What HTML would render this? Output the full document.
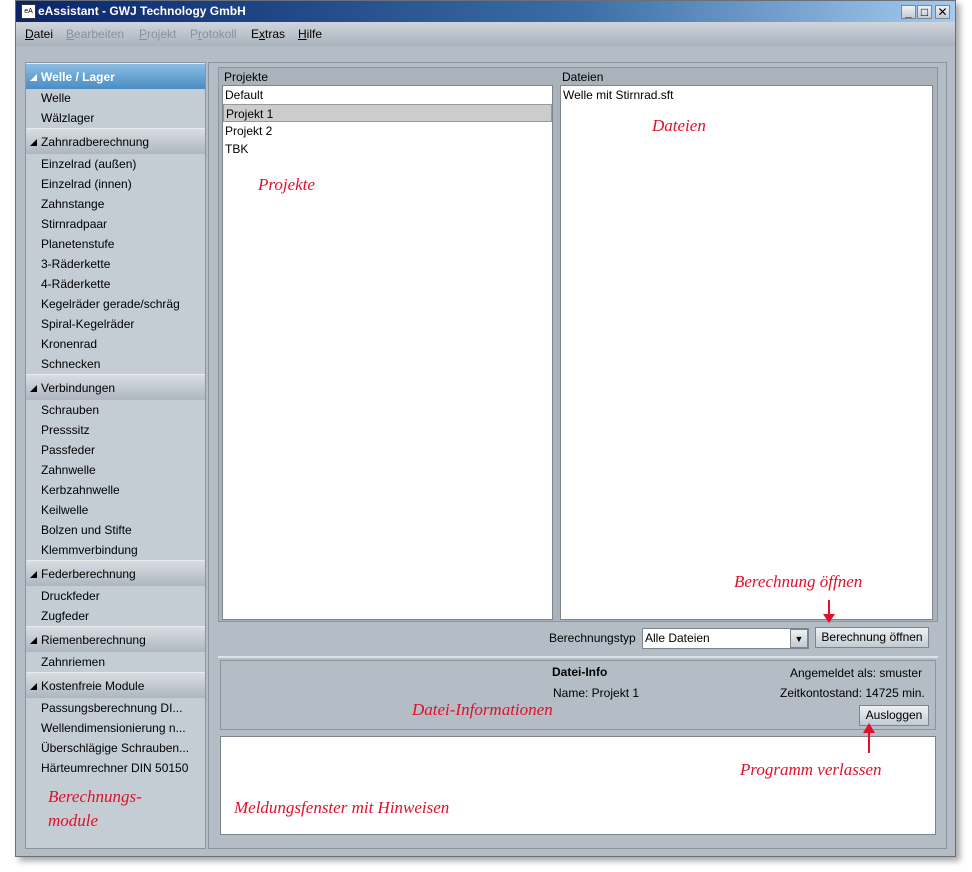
<!DOCTYPE html>
<html><head><meta charset="utf-8"><style>
*{box-sizing:border-box;margin:0;padding:0}
body{width:972px;height:872px;background:#fff;position:relative;font-family:"Liberation Sans","DejaVu Sans",sans-serif;font-size:12px;color:#000;overflow:hidden}
.abs{position:absolute}
.win{left:15px;top:0;width:941px;height:857px;background:#b4bcc6;border:1px solid #6a7078;box-shadow:4px 4px 6px rgba(0,0,0,.35)}
.title{left:16px;top:1px;width:939px;height:21px;background:linear-gradient(90deg,#0a246a,#3a6ea5 60%,#a6caf0);color:#fff;font-weight:bold;font-size:12px;line-height:21px;padding-left:22px}
.menu{left:16px;top:22px;width:939px;height:24px;background:linear-gradient(#d0d5dc,#aab2bc);line-height:24px;font-size:12px}
.menu span{position:absolute;top:0}
.dis{color:#8a9099}
.side{left:25px;top:62px;width:181px;height:787px;background:#c4ccd4;border:1px solid #8c949c}
.hd{position:absolute;left:0;width:179px;height:26px;background:linear-gradient(#d8dde3,#aeb6bf);line-height:26px;padding-left:15px;border-top:1px solid #e8ecef}
.hd:before{content:"";position:absolute;left:4px;top:10px;border-left:7px solid transparent;border-bottom:7px solid #000}
.hd.act{background:linear-gradient(#8cbde3,#4a8cc2);color:#fff;font-weight:bold}
.hd.act:before{border-bottom-color:#fff}
.it{position:absolute;left:15px;height:20px;line-height:20px}
.main{left:208px;top:62px;width:739px;height:787px;background:#b4bcc6;border:1px solid #8c949c}
.box{background:#fff;border:1px solid #7c848c}
.btn{background:linear-gradient(#eef1f4,#c3cad2);border:1px solid #7c848c;text-align:center;line-height:19px}
.red{color:#e0102a;font-style:italic;font-size:17px;font-family:"Liberation Serif",serif}
.arr{position:absolute;width:2px;background:#e0102a}
</style></head><body>
<div class="abs win"></div>
<div class="abs title">eAssistant - GWJ Technology GmbH</div>
<div class="abs" style="left:21px;top:4px;width:15px;height:15px;background:#fff;border:1px solid #333;font-size:7px;color:#000;line-height:13px;text-align:center">eA</div>
<div class="abs btn" style="left:901px;top:5px;width:15px;height:14px;line-height:12px;font-weight:bold">_</div>
<div class="abs btn" style="left:917px;top:5px;width:15px;height:14px;line-height:12px">□</div>
<div class="abs btn" style="left:935px;top:5px;width:15px;height:14px;line-height:12px;font-weight:bold">✕</div>
<div class="abs menu">
<span style="left:9px"><u>D</u>atei</span><span class="dis" style="left:50px"><u>B</u>earbeiten</span><span class="dis" style="left:123px"><u>P</u>rojekt</span><span class="dis" style="left:174px">P<u>r</u>otokoll</span><span style="left:235px">E<u>x</u>tras</span><span style="left:282px"><u>H</u>ilfe</span></div>
<div class="abs side">
<div class="hd act" style="top:0">Welle / Lager</div>
<div class="it" style="top:25px">Welle</div><div class="it" style="top:45px">Wälzlager</div>
<div class="hd" style="top:65px">Zahnradberechnung</div>
<div class="it" style="top:91px">Einzelrad (außen)</div><div class="it" style="top:111px">Einzelrad (innen)</div><div class="it" style="top:131px">Zahnstange</div><div class="it" style="top:151px">Stirnradpaar</div><div class="it" style="top:171px">Planetenstufe</div><div class="it" style="top:191px">3-Räderkette</div><div class="it" style="top:211px">4-Räderkette</div><div class="it" style="top:231px">Kegelräder gerade/schräg</div><div class="it" style="top:251px">Spiral-Kegelräder</div><div class="it" style="top:271px">Kronenrad</div><div class="it" style="top:291px">Schnecken</div>
<div class="hd" style="top:311px">Verbindungen</div>
<div class="it" style="top:337px">Schrauben</div><div class="it" style="top:357px">Presssitz</div><div class="it" style="top:377px">Passfeder</div><div class="it" style="top:397px">Zahnwelle</div><div class="it" style="top:417px">Kerbzahnwelle</div><div class="it" style="top:437px">Keilwelle</div><div class="it" style="top:457px">Bolzen und Stifte</div><div class="it" style="top:477px">Klemmverbindung</div>
<div class="hd" style="top:497px">Federberechnung</div>
<div class="it" style="top:523px">Druckfeder</div><div class="it" style="top:543px">Zugfeder</div>
<div class="hd" style="top:563px">Riemenberechnung</div>
<div class="it" style="top:589px">Zahnriemen</div>
<div class="hd" style="top:609px">Kostenfreie Module</div>
<div class="it" style="top:635px">Passungsberechnung DI...</div><div class="it" style="top:655px">Wellendimensionierung n...</div><div class="it" style="top:675px">Überschlägige Schrauben...</div><div class="it" style="top:695px">Härteumrechner DIN 50150</div>
<div class="red" style="position:absolute;left:22px;top:722px;line-height:24px">Berechnungs-<br>module</div>
</div>
<div class="abs main"></div>
<div class="abs" style="left:218px;top:67px;width:720px;height:555px;border:1px solid #8c949c;background:#aab2bc"></div>
<div class="abs" style="left:224px;top:70px">Projekte</div>
<div class="abs box" style="left:222px;top:85px;width:331px;height:535px">
<div style="height:18px;line-height:18px;padding-left:2px">Default</div>
<div style="height:18px;line-height:18px;padding-left:2px;background:#cccccc;border:1px solid #999">Projekt 1</div>
<div style="height:18px;line-height:18px;padding-left:2px">Projekt 2</div>
<div style="height:18px;line-height:18px;padding-left:2px">TBK</div>
</div>
<div class="abs" style="left:562px;top:70px">Dateien</div>
<div class="abs box" style="left:560px;top:85px;width:373px;height:535px"><div style="height:18px;line-height:18px;padding-left:2px">Welle mit Stirnrad.sft</div></div>
<div class="abs red" style="left:258px;top:175px">Projekte</div>
<div class="abs red" style="left:652px;top:116px">Dateien</div>
<div class="abs" style="left:218px;top:656px;width:720px;height:2px;background:#dde2e6"></div>
<div class="abs" style="left:549px;top:631px">Berechnungstyp</div>
<div class="abs box" style="left:642px;top:628px;width:167px;height:21px;line-height:19px;padding-left:2px">Alle Dateien<div class="btn" style="position:absolute;right:0;top:0;width:18px;height:19px;font-size:9px">▼</div></div>
<div class="abs btn" style="left:815px;top:627px;width:114px;height:21px">Berechnung öffnen</div>
<div class="abs red" style="left:734px;top:572px">Berechnung öffnen</div>
<div class="arr" style="left:828px;top:600px;height:18px"></div>
<div class="abs" style="left:823px;top:614px;border-left:6px solid transparent;border-right:6px solid transparent;border-top:9px solid #e0102a"></div>
<div class="abs" style="left:220px;top:660px;width:716px;height:70px;border:1px solid #8c949c"></div>
<div class="abs" style="left:552px;top:665px;font-weight:bold">Datei-Info</div>
<div class="abs" style="left:553px;top:686px">Name: Projekt 1</div>
<div class="abs" style="left:790px;top:666px">Angemeldet als: smuster</div>
<div class="abs" style="left:780px;top:686px">Zeitkontostand: 14725 min.</div>
<div class="abs btn" style="left:859px;top:705px;width:70px;height:21px">Ausloggen</div>
<div class="abs red" style="left:412px;top:700px">Datei-Informationen</div>
<div class="abs box" style="left:220px;top:736px;width:716px;height:99px"></div>
<div class="abs red" style="left:234px;top:798px">Meldungsfenster mit Hinweisen</div>
<div class="abs red" style="left:740px;top:760px">Programm verlassen</div>
<div class="arr" style="left:868px;top:733px;height:20px"></div>
<div class="abs" style="left:863px;top:723px;border-left:6px solid transparent;border-right:6px solid transparent;border-bottom:10px solid #e0102a"></div>
</body></html>
